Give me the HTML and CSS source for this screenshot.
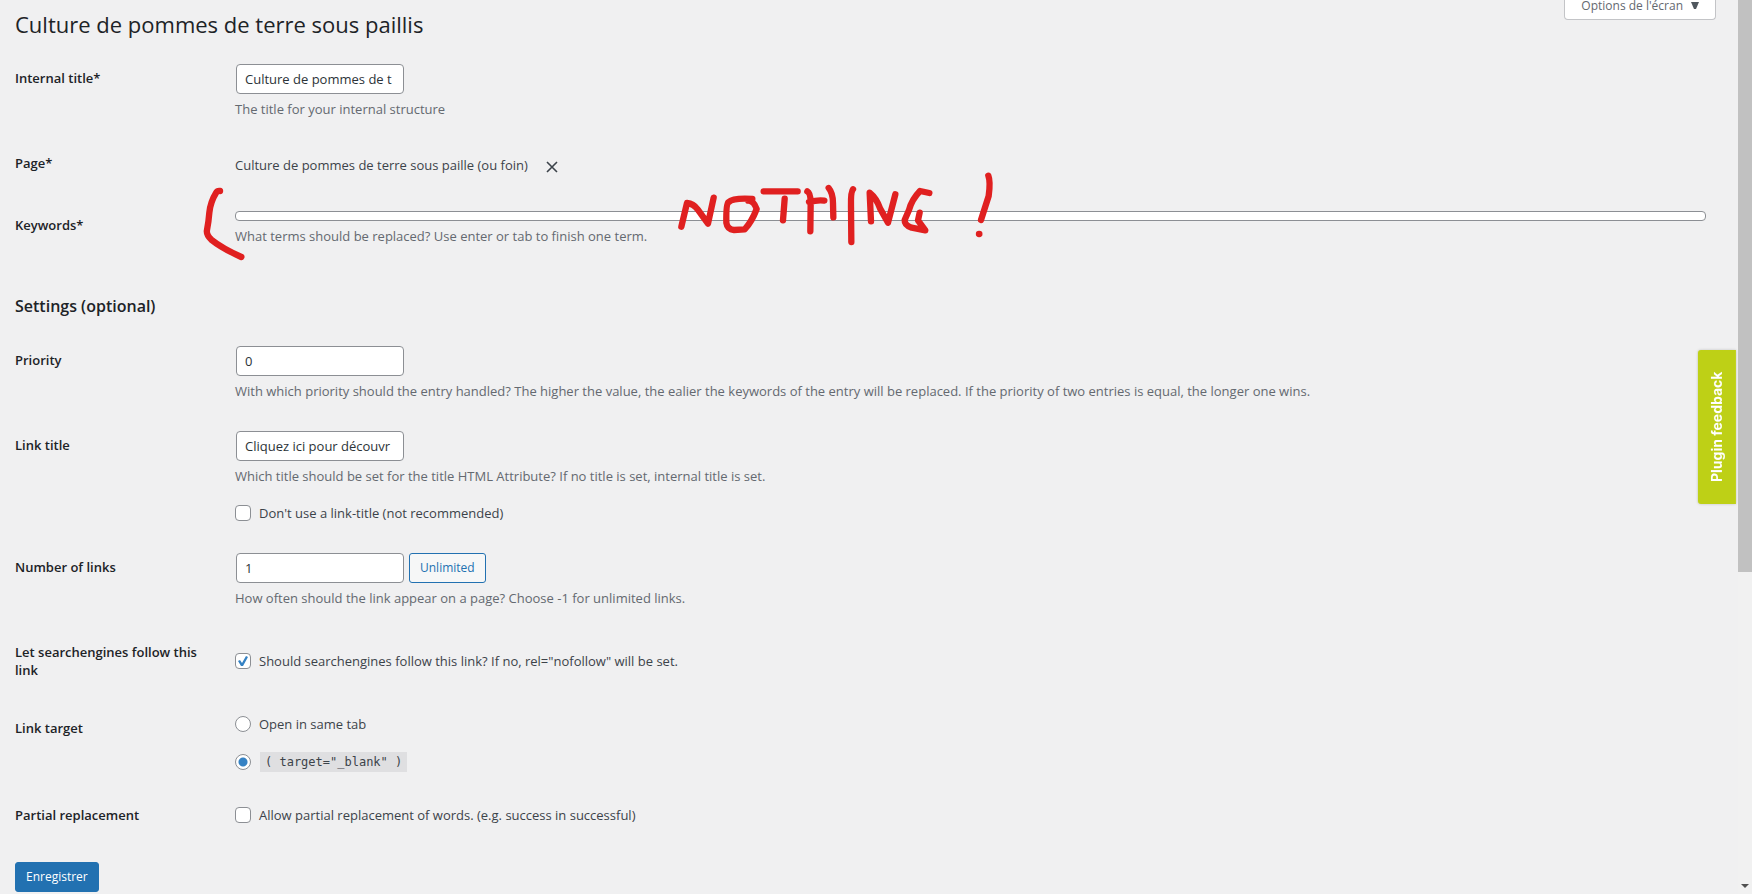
FILE: index.html
```html
<!DOCTYPE html>
<html lang="fr">
<head>
<meta charset="utf-8">
<title>Culture de pommes de terre sous paillis</title>
<link rel="stylesheet" href="styles.css">
</head>
<body>
<div class="screen">
  <main class="wrap">
    <header class="page-head">
      <h1 class="page-title">Culture de pommes de terre sous paillis</h1>
      <button class="screen-options" type="button">Options de l'écran
        <svg class="caret" viewBox="0 0 8 7" aria-hidden="true"><path d="M0 0h8L5 7H3z"/></svg>
      </button>
    </header>
    <form class="form">
      <div class="row">
        <label class="name" for="title">Internal title*</label>
        <div class="cell">
          <input class="text" id="title" type="text" value="Culture de pommes de t">
          <p class="hint">The title for your internal structure</p>
        </div>
      </div>
      <div class="row">
        <span class="name">Page*</span>
        <div class="cell page-cell">
          <span>Culture de pommes de terre sous paille (ou foin)</span>
          <button class="remove" type="button" aria-label="Remove">
            <svg class="cross" viewBox="0 0 12 12" aria-hidden="true"><path d="M1 1l10 10M11 1L1 11"/></svg>
          </button>
        </div>
      </div>
      <div class="row">
        <label class="name" for="keywords">Keywords*</label>
        <div class="cell">
          <input class="keywords" id="keywords" type="text">
          <p class="hint">What terms should be replaced? Use enter or tab to finish one term.</p>
          <svg class="ink ink-bracket" viewBox="0 0 900 330" aria-hidden="true">
            <path d="M120 93Q112 92 109 97Q91 126 88 158Q86 184 81 210Q78 224 94 239Q125 264 184 291"/>
          </svg>
          <svg class="ink ink-note" viewBox="0 0 1080 300" aria-hidden="true">
            <path d="M64 200L81 129Q100 131 113 148L144 191L161 113"/>
            <path d="M277 117Q220 113 205 127Q198 134 199 188Q202 208 222 210L254 208Q275 186 290 147Q281 122 265 122"/>
            <path d="M311 94H413M374 116L369 181"/>
            <path d="M442 94Q452 99 452 130L451 214M447 126Q475 119 493 122M506 84Q519 99 519 130L520 172"/>
            <path d="M579 88Q572 95 573 140L574 246"/>
            <path d="M633 184L629 98Q650 115 660 145L684 188L706 103"/>
            <path d="M808 99L780 93Q755 119 747 150L734 180Q733 196 755 203L796 211L774 181L779 158"/>
            <path d="M985 47Q992 65 986 108L963 180"/>
            <path d="M957 222h1"/>
          </svg>
        </div>
      </div>

      <h2 class="section">Settings (optional)</h2>

      <div class="row">
        <label class="name" for="priority">Priority</label>
        <div class="cell">
          <input class="text" id="priority" type="text" value="0">
          <p class="hint">With which priority should the entry handled? The higher the value, the ealier the keywords of the entry will be replaced. If the priority of two entries is equal, the longer one wins.</p>
        </div>
      </div>
      <div class="row">
        <label class="name" for="link-title">Link title</label>
        <div class="cell">
          <input class="text" id="link-title" type="text" value="Cliquez ici pour découvr">
          <p class="hint">Which title should be set for the title HTML Attribute? If no title is set, internal title is set.</p>
          <label class="choice choice-below"><input class="tick" type="checkbox">Don't use a link-title (not recommended)</label>
        </div>
      </div>
      <div class="row">
        <label class="name" for="links">Number of links</label>
        <div class="cell">
          <div class="inline">
            <input class="text" id="links" type="text" value="1">
            <button class="button" type="button">Unlimited</button>
          </div>
          <p class="hint">How often should the link appear on a page? Choose -1 for unlimited links.</p>
        </div>
      </div>
      <div class="row">
        <span class="name">Let searchengines follow this link</span>
        <div class="cell cell-middle">
          <label class="choice"><input class="tick" type="checkbox" checked>Should searchengines follow this link? If no, rel="nofollow" will be set.</label>
        </div>
      </div>
      <div class="row">
        <span class="name">Link target</span>
        <div class="cell radios">
          <label class="choice"><input class="tick radio" type="radio" name="target">Open in same tab</label>
          <label class="choice"><input class="tick radio" type="radio" name="target" checked><code class="code">( target="_blank" )</code></label>
        </div>
      </div>
      <div class="row">
        <span class="name">Partial replacement</span>
        <div class="cell cell-middle">
          <label class="choice"><input class="tick" type="checkbox">Allow partial replacement of words. (e.g. success in successful)</label>
        </div>
      </div>
      <button class="button button-primary" type="submit">Enregistrer</button>
    </form>
  </main>
  <div class="scrollbar" aria-hidden="true">
    <div class="thumb"></div>
    <svg class="arrow" viewBox="0 0 8 4"><path d="M0 0h8L4 4z"/></svg>
  </div>
</div>
<button class="feedback" type="button">Plugin feedback</button>
</body>
</html>
```

FILE: styles.css
```css
* { box-sizing: border-box; }

html { overflow: hidden; }

body {
  margin: 0;
  background: #f0f0f1;
  color: #3c434a;
  font: 13px/20px "Open Sans", "Noto Sans", sans-serif;
}

input, button { font: inherit; }

.screen {
  display: flex;
  height: 100vh;
}

.wrap {
  flex: 1;
  min-width: 0;
  padding: 0 22px 0 15px;
}

.page-head {
  display: flex;
  justify-content: space-between;
  align-items: flex-start;
}

.page-title {
  margin: 0;
  padding: 9px 0 10px;
  color: #1d2327;
  font-size: 22px;
  font-weight: 400;
  line-height: 30px;
}

.screen-options {
  display: flex;
  align-items: center;
  gap: 8px;
  height: 20px;
  padding: 0 16px 8px;
  border: 1px solid #c3c4c7;
  border-top: 0;
  border-radius: 0 0 4px 4px;
  background: #fff;
  color: #646970;
  font-size: 12px;
  line-height: 11px;
}

.caret { width: 8px; height: 7px; fill: #50575e; }

.row {
  display: grid;
  grid-template-columns: 210px 1fr;
}

.name {
  padding: 20px 10px 20px 0;
  color: #1d2327;
  font-weight: 600;
  line-height: 18px;
}

.cell {
  position: relative;
  padding: 15px 10px;
}

.cell-middle {
  display: flex;
  align-items: center;
}

.text {
  display: block;
  width: 168px;
  height: 30px;
  margin: 0 1px;
  padding: 0 8px;
  border: 1px solid #8c8f94;
  border-radius: 4px;
  background: #fff;
  color: #2c3338;
}

.hint {
  margin: 5px 0 0;
  color: #646970;
}

.page-cell {
  display: flex;
  align-items: center;
  gap: 18px;
  height: 62px;
}

.remove {
  display: flex;
  padding: 3px 0 0;
  border: 0;
  background: none;
}

.cross {
  width: 12px;
  height: 12px;
  fill: none;
  stroke: #3c434a;
  stroke-width: 1.6;
}

.keywords {
  display: block;
  width: 100%;
  height: 10px;
  padding: 0 8px;
  border: 1px solid #8c8f94;
  border-radius: 4px;
  background: #fff;
}

.ink {
  position: absolute;
  top: -36px;
  fill: none;
  stroke: #e02020;
  stroke-width: 19;
  stroke-linecap: round;
  stroke-linejoin: round;
  pointer-events: none;
}

.ink-bracket { left: -45px; width: 300px; height: 110px; }

.ink-note { left: 435px; width: 360px; height: 100px; }

.section {
  margin: 33px 0 13px;
  color: #1d2327;
  font-size: 16px;
  font-weight: 600;
  line-height: 24px;
}

.choice {
  display: flex;
  align-items: center;
  gap: 8px;
}

.choice-below { margin-top: 17px; }

.radios {
  display: flex;
  flex-direction: column;
  gap: 18px;
  padding-bottom: 14px;
}

.tick {
  appearance: none;
  flex: none;
  width: 16px;
  height: 16px;
  margin: 0;
  border: 1px solid #8c8f94;
  border-radius: 4px;
  background: #fff;
}

.tick[type="checkbox"]:checked {
  background: #fff url("data:image/svg+xml,%3Csvg xmlns='http://www.w3.org/2000/svg' viewBox='0 0 14 14'%3E%3Cpath d='M2 7l2-1 2 3 4-7 2 1-5 9H5z' fill='%233582c4'/%3E%3C/svg%3E") center / 14px 14px no-repeat;
}

.radio { border-radius: 50%; }

.radio:checked {
  background: radial-gradient(circle, #3582c4 0 4px, #fff 5px);
}

.code {
  padding: 3px 5px 2px;
  margin-left: 1px;
  background: #dfdfe1;
  font: 12px/15px "DejaVu Sans Mono", monospace;
}

.inline {
  display: flex;
  gap: 4px;
}

.button {
  height: 30px;
  padding: 0 10px;
  border: 1px solid #2271b1;
  border-radius: 3px;
  background: #f6f7f7;
  color: #2271b1;
  font-size: 12px;
}

.button-primary {
  display: block;
  margin-top: 18px;
  background: #2271b1;
  color: #fff;
}

.scrollbar {
  display: flex;
  flex-direction: column;
  justify-content: space-between;
  align-items: center;
  width: 14px;
  background: #f1f1f1;
}

.thumb {
  width: 100%;
  height: 64%;
  background: #c1c1c1;
}

.arrow {
  width: 8px;
  height: 4px;
  margin-bottom: 6px;
  fill: #505050;
}

.feedback {
  position: fixed;
  top: 350px;
  right: 16px;
  width: 38px;
  height: 154px;
  padding: 0;
  border: 0;
  border-radius: 0 3px 3px 0;
  background: #bed016;
  box-shadow: 0 0 3px rgba(0, 0, 0, 0.2);
  color: #fff;
  font: 700 14px/38px Inter, sans-serif;
  writing-mode: vertical-rl;
  transform: rotate(180deg);
}
```
